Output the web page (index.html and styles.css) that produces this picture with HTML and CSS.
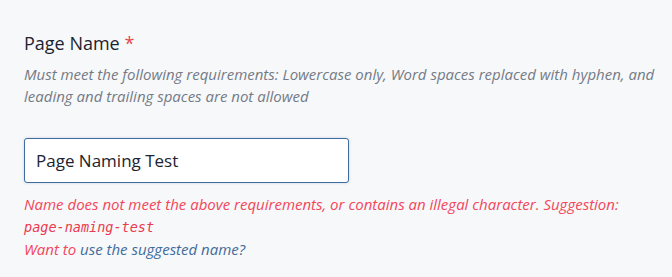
FILE: index.html
```html
<!DOCTYPE html>
<html lang="en">
<head>
    <meta charset="UTF-8">
    <meta name="viewport" content="width=device-width, initial-scale=1.0">
    <title>Page Name</title>
    <link rel="stylesheet" href="styles.css">
</head>
<body>
    <div class="field">
        <label class="label" for="pageName">Page Name <span class="req">*</span></label>
        <div class="help">Must meet the following requirements: Lowercase only, Word spaces replaced with hyphen, and leading and trailing spaces are not allowed</div>

        <input type="text" id="pageName" class="input" value="Page Naming Test" />

        <div class="error">
            Name does not meet the above requirements, or contains an illegal character. Suggestion:<br>
            <code class="suggest">page-naming-test</code><br>
            Want to <a href="#" class="link">use the suggested name?</a>
        </div>
    </div>
</body>
</html>
```

FILE: styles.css
```css
body { margin: 0; background-color: #f7f8fa; font-family: "Open Sans", Arial, sans-serif; color: #1f2933; }
.field { padding: 29px 8px 0 24px; }
.label { display: block; font-size: 18px; line-height: 28px; color: #1c2430; }
.req { color: #e8464f; }
.help { margin-top: 6px; font-size: 15px; line-height: 22px; font-style: italic; color: #737b86; }
.input { display: block; box-sizing: border-box; width: 325px; height: 45px; margin-top: 31px; padding: 0 11px; font-family: "Open Sans", Arial, sans-serif; font-size: 17px; color: #1c2430; background: #fff; border: 1px solid #3d6d9f; border-radius: 3px; box-shadow: 0 0 3px rgba(61, 109, 159, 0.25); outline: none; }
.error { margin-top: 10px; font-size: 15px; line-height: 22px; font-style: italic; color: #f2475a; }
.suggest { font-family: "DejaVu Sans Mono", monospace; font-size: 13.5px; font-style: italic; color: #ea3a4f; }
.link { color: #3f6b9b; text-decoration: none; }
```
